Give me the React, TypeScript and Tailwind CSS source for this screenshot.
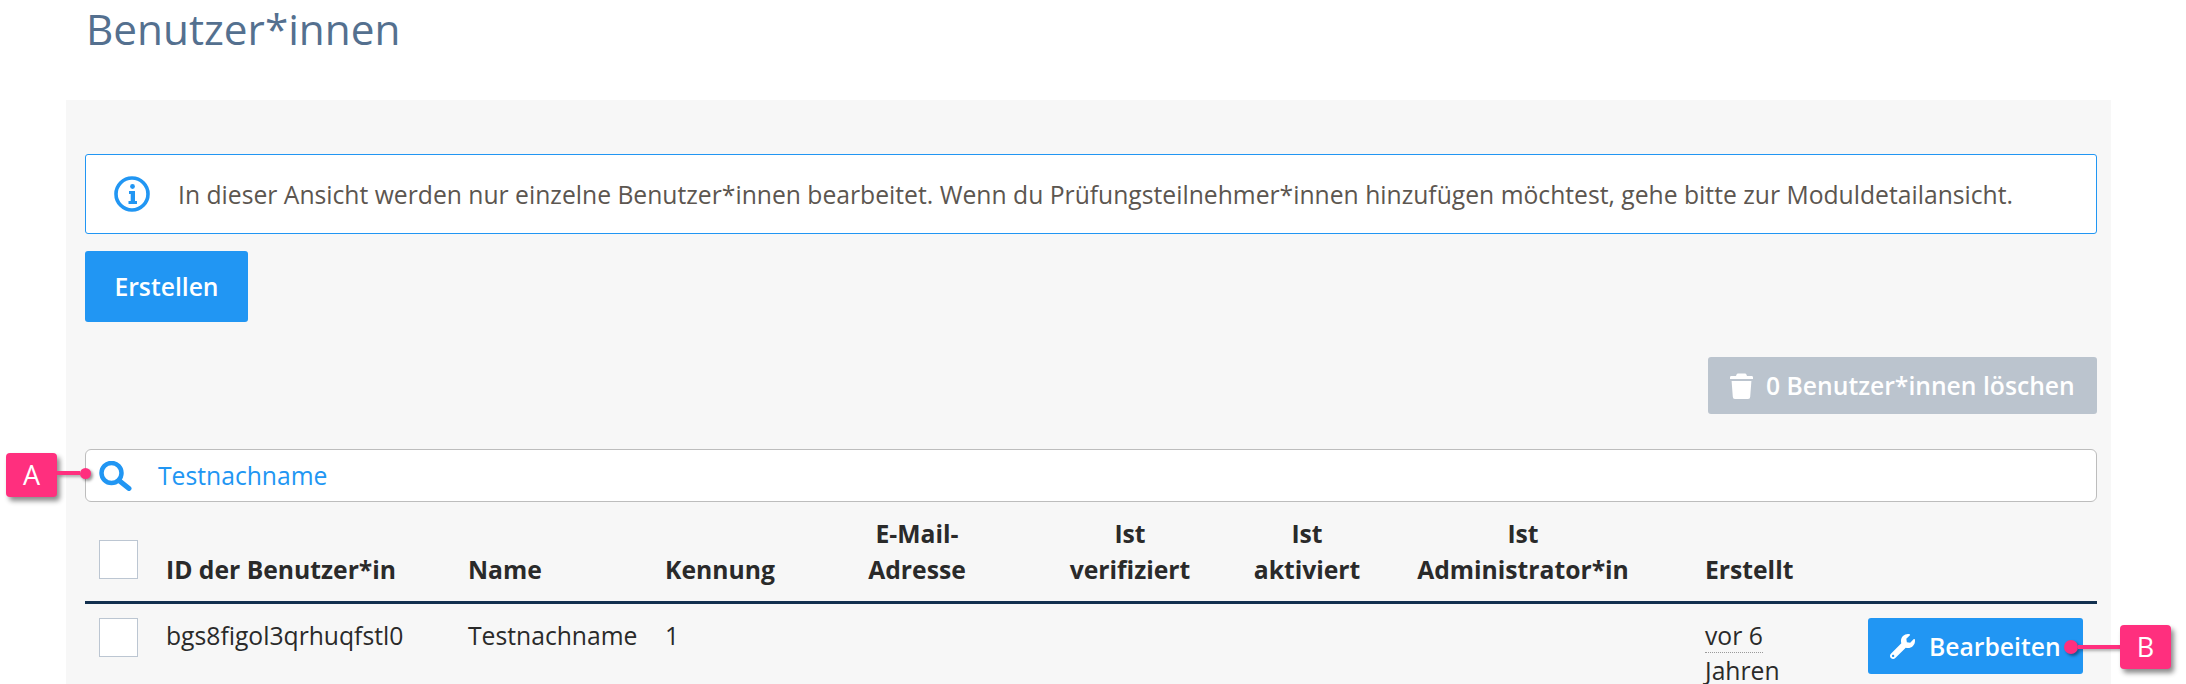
import { FaWrench } from "react-icons/fa";

const columns = "grid-cols-[81px_302px_197px_173px_158px_254px_114px_298px_206px_229px]";

function InfoIcon() {
  return (
    <svg viewBox="0 0 36 36" className="h-[36px] w-[36px] text-[#2196f3]" fill="none">
      <circle cx="18" cy="18" r="16" stroke="currentColor" strokeWidth="3.6" />
      <circle cx="18.5" cy="10.5" r="2.4" fill="currentColor" />
      <path d="M15 15h6v10h2v3h-8.5v-3h2.2v-7H15z" fill="currentColor" />
    </svg>
  );
}

function SearchIcon() {
  return (
    <svg viewBox="0 0 33 30" className="h-[30px] w-[33px] text-[#2196f3]" fill="none">
      <circle cx="12.5" cy="12" r="10" stroke="currentColor" strokeWidth="4.5" />
      <path d="M20 19.5 30 27.5" stroke="currentColor" strokeWidth="5" strokeLinecap="round" />
    </svg>
  );
}

function TrashIcon() {
  return (
    <svg viewBox="0 0 23 26" className="h-[26px] w-[23px] text-white" fill="currentColor">
      <path d="M8 0.5h7a1.5 1.5 0 0 1 1.4 1L17 3h4.6A1.4 1.4 0 0 1 23 4.4V6H0V4.4A1.4 1.4 0 0 1 1.4 3H6l.6-1.5a1.5 1.5 0 0 1 1.4-1z" />
      <path d="M1.6 8h19.8l-1.2 15.8A2.2 2.2 0 0 1 18 26H5a2.2 2.2 0 0 1-2.2-2.2z" />
    </svg>
  );
}

function Checkbox() {
  return <div className="h-[39px] w-[39px] border border-[#bcc6d2] bg-white" />;
}

function Marker({ label, side }: { label: string; side: "left" | "right" }) {
  const isLeft = side === "left";
  return (
    <div
      className={`absolute flex items-center ${
        isLeft ? "left-[6px] top-[453px]" : "left-[2064px] top-[625px] flex-row-reverse"
      }`}
    >
      <div className="flex h-[44px] w-[51px] items-center justify-center rounded-[4px] bg-[#ff2f7e] text-[27px] text-white shadow-[3px_4px_5px_rgba(0,0,0,0.45)]">
        {label}
      </div>
      <div
        className={`h-[4px] bg-[#ff2f7e] shadow-[2px_2px_3px_rgba(0,0,0,0.3)] ${
          isLeft ? "mb-[4px] w-[23px]" : "w-[42px]"
        }`}
      />
      <div
        className={`rounded-full bg-[#ff2f7e] shadow-[2px_2px_3px_rgba(0,0,0,0.4)] ${
          isLeft ? "mb-[4px] h-[11px] w-[11px]" : "h-[14px] w-[14px]"
        }`}
      />
    </div>
  );
}

export default function App() {
  return (
    <div className="relative h-[684px] overflow-hidden bg-white font-['Open_Sans',sans-serif] text-[24.7px] text-[#2a2a2a]">
      <h1 className="h-[100px] pl-[86px] pt-[2px] text-[42.3px] leading-[54px] text-[#54708f]">Benutzer*innen</h1>

      <div className="ml-[66px] mr-[75px] h-[584px] bg-[#f7f7f7] pl-[19px] pr-[14px] pt-[54px]">
        <div className="flex h-[80px] items-center rounded-[3px] border border-[#2196f3] bg-white pl-[28px] text-[#5c5650]">
          <InfoIcon />
          <span className="ml-[28px] mt-[2px] whitespace-nowrap">
            In dieser Ansicht werden nur einzelne Benutzer*innen bearbeitet. Wenn du Prüfungsteilnehmer*innen hinzufügen möchtest, gehe bitte zur Moduldetailansicht.
          </span>
        </div>

        <button className="mt-[17px] block h-[71px] w-[163px] rounded-[3px] bg-[#2196f3] font-semibold text-white">
          Erstellen
        </button>

        <div className="mt-[35px] flex justify-end">
          <button className="flex h-[57px] w-[389px] items-center gap-[13px] whitespace-nowrap rounded-[3px] bg-[#bbc4ce] pl-[22px] font-semibold text-white">
            <TrashIcon />
            0 Benutzer*innen löschen
          </button>
        </div>

        <div className="mt-[35px] flex h-[53px] items-center rounded-[6px] border border-[#bdbdbd] bg-white pl-[13px] text-[#2196f3]">
          <SearchIcon />
          <span className="ml-[26px]">Testnachname</span>
        </div>

        <div className={`mt-[14px] grid ${columns} border-b-[3px] border-[#12304f] font-bold leading-[36px]`}>
          <div className="pl-[14px] pt-[24px]">
            <Checkbox />
          </div>
          <div className="self-end pb-[13px]">ID der Benutzer*in</div>
          <div className="self-end pb-[13px]">Name</div>
          <div className="self-end pb-[13px]">Kennung</div>
          <div className="self-end pb-[13px] text-center">E-Mail-<br />Adresse</div>
          <div className="self-end pb-[13px] pl-[14px] text-center">Ist<br />verifiziert</div>
          <div className="self-end pb-[13px] text-center">Ist<br />aktiviert</div>
          <div className="self-end pb-[13px] pl-[20px] text-center">Ist<br />Administrator*in</div>
          <div className="self-end pb-[13px] pl-[43px]">Erstellt</div>
          <div />
        </div>

        <div className={`grid ${columns} pt-[14px] leading-[35px]`}>
          <div className="pl-[14px]">
            <Checkbox />
          </div>
          <div>bgs8figol3qrhuqfstl0</div>
          <div>Testnachname</div>
          <div>1</div>
          <div />
          <div />
          <div />
          <div />
          <div className="pl-[43px]">
            <span className="border-b border-dotted border-[#9a9a9a]">vor 6</span>
            <br />
            Jahren
          </div>
          <div>
            <button className="flex h-[56px] w-[215px] items-center gap-[14px] whitespace-nowrap rounded-[3px] bg-[#2196f3] pl-[22px] font-semibold text-white">
              <FaWrench className="h-[25px] w-[25px]" />
              Bearbeiten
            </button>
          </div>
        </div>
      </div>

      <Marker label="A" side="left" />
      <Marker label="B" side="right" />
    </div>
  );
}
